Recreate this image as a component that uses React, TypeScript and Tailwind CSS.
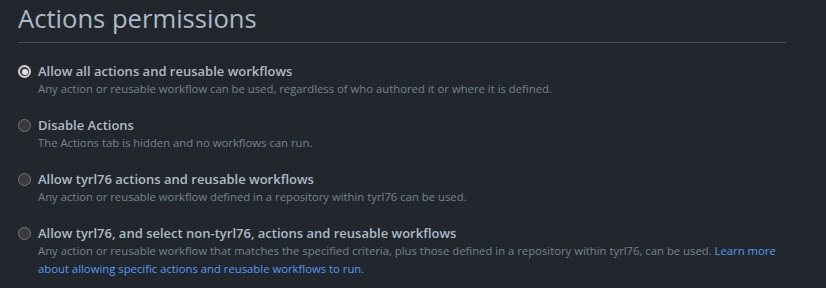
import React from "react";

type Option = {
  id: string;
  label: string;
  description: string;
  link?: string;
};

const OPTIONS: Option[] = [
  {
    id: "all",
    label: "Allow all actions and reusable workflows",
    description:
      "Any action or reusable workflow can be used, regardless of who authored it or where it is defined.",
  },
  {
    id: "disable",
    label: "Disable Actions",
    description: "The Actions tab is hidden and no workflows can run.",
  },
  {
    id: "local",
    label: "Allow tyrl76 actions and reusable workflows",
    description: "Any action or reusable workflow defined in a repository within tyrl76 can be used.",
  },
  {
    id: "selected",
    label: "Allow tyrl76, and select non-tyrl76, actions and reusable workflows",
    description:
      "Any action or reusable workflow that matches the specified criteria, plus those defined in a repository within tyrl76, can be used.",
    link: "Learn more about allowing specific actions and reusable workflows to run.",
  },
];

const Radio: React.FC<{ checked: boolean }> = ({ checked }) =>
  checked ? (
    <span className="mt-[3px] flex h-[13px] w-[13px] shrink-0 items-center justify-center rounded-full bg-[#d4d4d4]">
      <span className="flex h-[9px] w-[9px] items-center justify-center rounded-full bg-[#3b3b3b]">
        <span className="h-[6px] w-[6px] rounded-full bg-[#e2e2e2]" />
      </span>
    </span>
  ) : (
    <span className="mt-[3px] h-[13px] w-[13px] shrink-0 rounded-full border border-[#767676] bg-[#3b3b3b]" />
  );

export default function App() {
  return (
    <div className="h-[288px] w-[826px] overflow-hidden bg-[#22272e] font-['Open_Sans',sans-serif] text-[#adbac7]">
      <div className="w-[786px] pl-[18px] pt-[3px]">
        <h2 className="border-b border-[#444c56] pb-[7px] text-[25.6px] leading-[32px] font-normal">
          Actions permissions
        </h2>

        <div className="mt-[19px] flex flex-col gap-[18px]">
          {OPTIONS.map((opt) => (
            <label key={opt.id} className="flex gap-[7px]">
              <Radio checked={opt.id === "all"} />
              <div className="flex flex-col">
                <span className="text-[13px] leading-[18px] font-semibold">{opt.label}</span>
                <span className="text-[11.3px] leading-[18px] text-[#768390]">
                  {opt.description}{" "}
                  {opt.link && <a className="text-[#539bf5]">{opt.link}</a>}
                </span>
              </div>
            </label>
          ))}
        </div>
      </div>
    </div>
  );
}
